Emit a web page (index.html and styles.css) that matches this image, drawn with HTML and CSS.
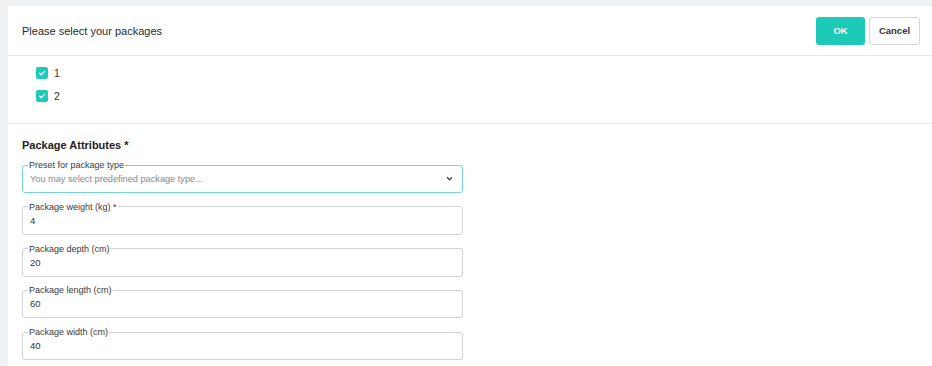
FILE: index.html
```html
<!DOCTYPE html>
<html lang="en">
<head>
    <meta charset="UTF-8">
    <title>Select packages</title>
    <link rel="stylesheet" href="styles.css">
</head>
<body>
    <div class="dialog">
        <div class="dialog-header">
            <h2>Please select your packages</h2>
            <div class="actions">
                <button class="btn btn-ok">OK</button>
                <button class="btn btn-cancel">Cancel</button>
            </div>
        </div>

        <div class="package-list">
            <label class="check">
                <span class="box">
                    <svg viewBox="0 0 12 12" width="12" height="12"><path d="M3.5 6.2 5.2 7.8 8.6 4.4" fill="none" stroke="#fff" stroke-width="1.3" stroke-linecap="round" stroke-linejoin="round"/></svg>
                </span>
                1
            </label>
            <label class="check">
                <span class="box">
                    <svg viewBox="0 0 12 12" width="12" height="12"><path d="M3.5 6.2 5.2 7.8 8.6 4.4" fill="none" stroke="#fff" stroke-width="1.3" stroke-linecap="round" stroke-linejoin="round"/></svg>
                </span>
                2
            </label>
        </div>

        <div class="attributes">
            <h3>Package Attributes *</h3>

            <fieldset class="field field-focus">
                <legend>Preset for package type</legend>
                <div class="field-value placeholder">
                    <span>You may select predefined package type...</span>
                    <svg viewBox="0 0 8 6" width="7" height="5"><path d="M1 1.5 4 4.5 7 1.5" fill="none" stroke="#444" stroke-width="1.5"/></svg>
                </div>
            </fieldset>

            <fieldset class="field">
                <legend>Package weight (kg) *</legend>
                <div class="field-value">4</div>
            </fieldset>

            <fieldset class="field">
                <legend>Package depth (cm)</legend>
                <div class="field-value">20</div>
            </fieldset>

            <fieldset class="field">
                <legend>Package length (cm)</legend>
                <div class="field-value">60</div>
            </fieldset>

            <fieldset class="field">
                <legend>Package width (cm)</legend>
                <div class="field-value">40</div>
            </fieldset>
        </div>
    </div>
</body>
</html>
```

FILE: styles.css
```css
* {
    margin: 0;
    padding: 0;
    box-sizing: border-box;
}

body {
    font-family: 'Liberation Sans', Arial, sans-serif;
    background: #f0f1f3;
    padding: 6px 0 0 8px;
    color: #222;
    overflow: hidden;
    height: 366px;
}

.dialog {
    background: #fff;
    height: 100%;
}

.dialog-header {
    display: flex;
    align-items: center;
    justify-content: space-between;
    height: 50px;
    padding: 0 12px 0 14px;
    border-bottom: 1px solid #e6e8ea;
}

.dialog-header h2 {
    font-size: 11px;
    font-weight: 400;
    color: #2b2b2b;
}

.actions {
    display: flex;
    gap: 4px;
}

.btn {
    height: 28px;
    border-radius: 3px;
    font-family: inherit;
    font-size: 9.5px;
    font-weight: 700;
    cursor: pointer;
}

.btn-ok {
    width: 49px;
    background: #1dc9b7;
    color: #fff;
    border: none;
}

.btn-cancel {
    width: 51px;
    background: #fff;
    color: #333;
    border: 1px solid #d3d6da;
}

.package-list {
    display: flex;
    flex-direction: column;
    gap: 7px;
    padding: 9px 28px 19px;
    border-bottom: 1px solid #e6e8ea;
}

.check {
    display: flex;
    align-items: center;
    gap: 6px;
    font-size: 10.5px;
    color: #333;
    height: 16px;
}

.box {
    width: 12px;
    height: 12px;
    border-radius: 2px;
    background: #1dc9b7;
    display: flex;
}

.attributes {
    padding: 15px 14px 0;
    width: 469px;
}

.attributes h3 {
    font-size: 11px;
    font-weight: 700;
    color: #222;
    margin-bottom: 8px;
}

.field {
    border: 1px solid #cfd2d6;
    border-radius: 3px;
    padding: 0 7px;
    margin-bottom: 7.75px;
    height: 34px;
}

.field-focus {
    border-color: #72d8cd;
}

.field legend {
    font-size: 9px;
    color: #3a3a3a;
    padding: 0 1px;
    margin-left: -2px;
    line-height: 12px;
}

.field-value {
    display: flex;
    align-items: center;
    justify-content: space-between;
    font-size: 9.5px;
    color: #333;
    height: 17px;
    padding-bottom: 2px;
}

.placeholder {
    font-size: 9.2px;
    color: #888;
}

.placeholder svg {
    margin-right: 2px;
}
```
